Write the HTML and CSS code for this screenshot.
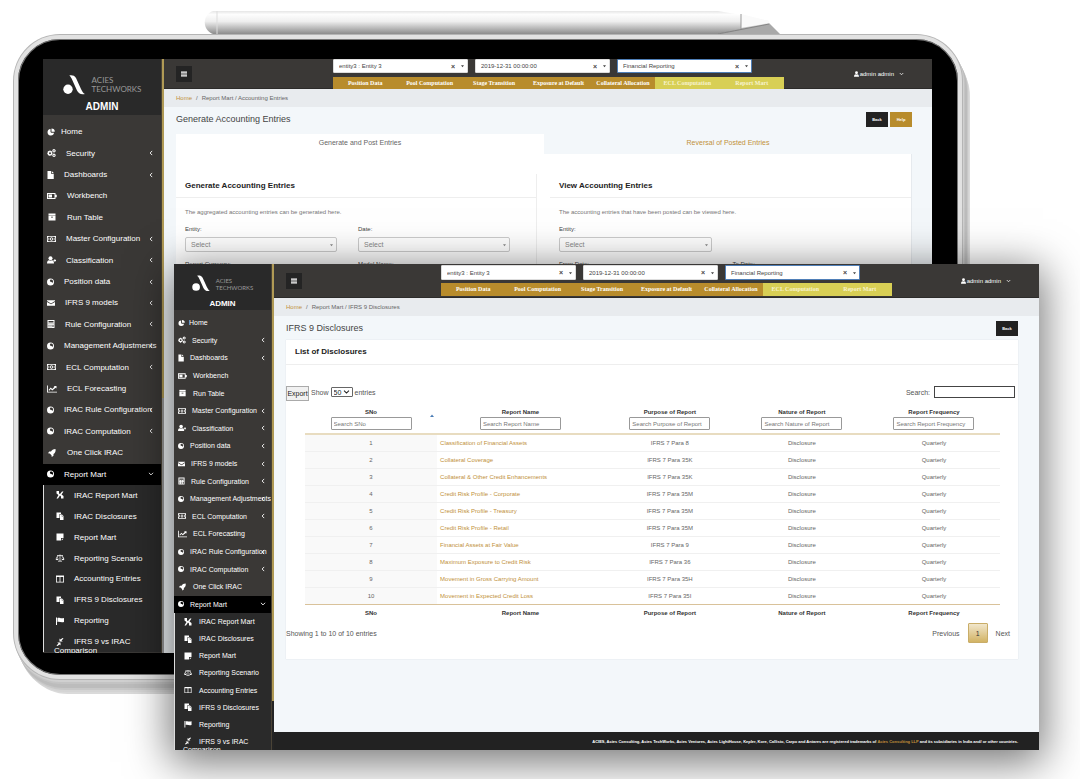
FILE: index.html
```html
<!DOCTYPE html>
<html lang="en">
<head>
<meta charset="utf-8">
<meta name="viewport" content="width=device-width, initial-scale=1">
<title>Acies TechWorks</title>
<link rel="stylesheet" href="styles.css">
</head>
<body>
<svg class="sprite" aria-hidden="true">
  <symbol id="pie" viewBox="0 0 16 16"><path d="M7 2a6.500 6.500 0 1 0 7 7.500H8.500L7 8z"/><path d="M9 1a6.500 6.500 0 0 1 6.500 6.500H9z"/></symbol>
  <symbol id="cogs" viewBox="0 0 18 16"><path fill-rule="evenodd" d="M5 3h2l.4 1.500 1.600-.6 1.300 1.500-.9 1.300 1.600.8v2l-1.600.5.7 1.500L8.700 13 7.300 12.200 6.800 14h-2l-.5-1.800L2.700 13 1.300 11.500 2 10 .5 9.500v-2L2 7l-.7-1.500L2.700 4l1.600.6zM6 6.500a2 2 0 1 0 0 4 2 2 0 0 0 0-4z"/><path fill-rule="evenodd" d="M14 0l2 1 1.500 2L16.500 6 14 7 11.500 6l-1-2.500L11.500 1zM14 2.300a1.300 1.300 0 1 0 0 2.600 1.300 1.300 0 0 0 0-2.600zM14 9l2 1 1.500 2-1 3L14 16l-2.500-1-1-2.500 1-2.500zM14 11.300a1.300 1.300 0 1 0 0 2.600 1.300 1.300 0 0 0 0-2.600z"/></symbol>
  <symbol id="file" viewBox="0 0 14 16"><path d="M1 0h7v5.500h5.500V16H1z"/><path d="M9.500 0l4 4.200h-4z"/></symbol>
  <symbol id="battery" viewBox="0 0 20 14"><path fill-rule="evenodd" d="M0 1h17v3.500h2.500v5H17V13H0zM2 3v8h13V3z"/><path d="M3 4h7v6H3z"/></symbol>
  <symbol id="archive" viewBox="0 0 20 16"><path d="M3 1h14v4H3z"/><path fill-rule="evenodd" d="M3 5.500h14V15H3zM8 7.500V9h4V7.500z"/></symbol>
  <symbol id="money" viewBox="0 0 18 14"><path fill-rule="evenodd" d="M0 1h18v12H0zM3.500 2.500L1.500 4.500v5l2 2h11l2-2v-5l-2-2z"/><path fill-rule="evenodd" d="M9 3.500a3 3.500 0 1 1 0 7 3 3.500 0 0 1 0-7zM8.200 5v4h1.600V5zM3 5h1.500v4H3zM13.500 5H15v4h-1.500z"/></symbol>
  <symbol id="user" viewBox="0 0 18 16"><circle cx="7" cy="4.500" r="4"/><path d="M0 15c0-5 2-6.500 4-6.500 2 1.200 4 1.200 6 0 2 0 4 1.500 4 6.500z"/><path d="M13 8h2V6h1.500v2h2v1.800h-2v2H15v-2h-2z"/></symbol>
  <symbol id="globe" viewBox="0 0 16 16"><path fill-rule="evenodd" d="M8 0a8 8 0 1 1 0 16A8 8 0 0 1 8 0zM8 2.500l-1.500 2 1 3 3 .5 1.500 2 2-2.500-1-3.500-2.500-2z"/></symbol>
  <symbol id="mail" viewBox="0 0 18 16"><path d="M0 2h18v1.500L9 9 0 3.500z"/><path d="M0 5.500L9 11l9-5.500V14H0z"/></symbol>
  <symbol id="calc" viewBox="0 0 16 16"><path fill-rule="evenodd" d="M1 0h14v16H1zM3 2v3h10V2zM3 7v1.500h2V7zM7 7v1.500h2V7zM11 7v1.500h2V7zM3 10v1.500h2V10zM7 10v1.500h2V10zM11 10v4h2v-4zM3 13v1.500h2V13zM7 13v1.500h2V13z"/></symbol>
  <symbol id="chart" viewBox="0 0 20 16"><path d="M0 1h1.800v12.500H20V15H0z"/><path d="M3 10l4.500-5 3 3L15 3.500l-1.500-1.500H19v5l-1.700-1.500L10.500 11l-3-3L4.500 11.500z"/></symbol>
  <symbol id="rocket" viewBox="0 0 20 16"><path d="M17 0c-5 0-7 2-9 5H4.500L2 8.500l3.500.5 3.500 3.500.5 3.500 3.500-2.500V10c3-2 5-5 4-10z"/></symbol>
  <symbol id="percent" viewBox="0 0 16 16"><path d="M1 0h5v5l2 1 4-5h3l-4 6 4 3v5h-5v-4L8 9l-4 6H1l4-7-4-3z"/></symbol>
  <symbol id="paste" viewBox="0 0 16 16"><path d="M1 1h9v3H7v8H1z"/><path fill-rule="evenodd" d="M8 5h4l3 3v8H8zM11.500 6.500v2.500h2.500z"/></symbol>
  <symbol id="note" viewBox="0 0 16 16"><path d="M1 1h14v9h-5v5H1z"/><path d="M11.500 11.500H15L11.500 15z"/></symbol>
  <symbol id="scale" viewBox="0 0 18 16"><path d="M8.300 1h1.400v1.500H15V4h-.5l3.200 6c0 3-5.500 3-5.500 0l2.300-5-4.800-1v9.500H13V15H5v-1.500h3.300V4L3.500 5 6 10c0 3-5.700 3-5.700 0l3-6H3V2.500h5.300zM3.200 6.500L1.700 9.800h3zM14.200 6.500l-1.300 3.300h2.900z"/></symbol>
  <symbol id="columns" viewBox="0 0 18 16"><path fill-rule="evenodd" d="M1 1h16v14H1zM2.600 4v9.400h5.600V4zM9.800 4v9.400h5.600V4z"/></symbol>
  <symbol id="flag" viewBox="0 0 18 16"><path d="M1 1h2v15H1zM4 2c4-1.500 6 2 13 0v8c-6 2-9-1.500-13 0z"/></symbol>
  <symbol id="compress" viewBox="0 0 18 16"><path d="M2 15l4-4-2.500-2H10v6l-2-2L4 16zM16 1l-4 4 2.500 2H8V1l2 2L14 0z"/></symbol>
  <symbol id="left" viewBox="0 0 8 10"><path d="M6 1.500L2.500 5 6 8.500" fill="none" stroke="currentColor" stroke-width="1.500"/></symbol>
  <symbol id="down" viewBox="0 0 10 8"><path d="M1.500 2L5 5.500 8.500 2" fill="none" stroke="currentColor" stroke-width="1.500"/></symbol>
  <symbol id="caret" viewBox="0 0 8 8"><path d="M0 2h8L4 7z"/></symbol>
  <symbol id="up" viewBox="0 0 8 8"><path d="M0 6h8L4 1z"/></symbol>
  <symbol id="person" viewBox="0 0 14 16"><circle cx="7" cy="4.500" r="4"/><path d="M0 16c0-5 2-7.500 4-7.500 2 1.200 4 1.200 6 0 2 0 4 2.500 4 7.500z"/></symbol>
  <symbol id="bars" viewBox="0 0 10 10"><path d="M0 1h10v2H0zM0 4h10v2H0zM0 7h10v2H0z"/></symbol>
  <symbol id="logo" viewBox="2 3 22 20"><circle cx="7" cy="17.300" r="4.700"/><path d="M8.300 3.500C11 3 13.500 3.500 15 6l5 11c1.500 3 2.500 4.500 4 5-4 1-6.500-.5-8-3.500l-4.500-10C10.500 6 9.500 4.500 8.300 3.500z"/></symbol>
</svg>

<main class="stage">
  <svg class="stylus" viewBox="0 0 580 26" aria-hidden="true">
    <defs><linearGradient id="barrel" x1="0" y1="0" x2="0" y2="1"><stop offset="0" stop-color="#e6e6e6"/><stop offset=".15" stop-color="#fdfdfd"/><stop offset=".45" stop-color="#efefef"/><stop offset="1" stop-color="#8c8c8c"/></linearGradient></defs>
    <path d="M515 24L566 13L578 25H515z" fill="#a9a9a9"/>
    <path d="M10 1H515L538 5L566 11V14L515 24H10C-1 20-1 5 10 1z" fill="url(#barrel)"/>
    <path d="M538 4l28 7v2l-28 5z" fill="#fafafa"/>
    <path d="M14 1v23" stroke="#ddd"/><path d="M538 4v15" stroke="#999"/><path d="M515 24l51-10" stroke="#777" stroke-width=".8"/>
  </svg>

  <section class="tablet" aria-label="Accounting entries">
    <div class="app app-back">
      <aside class="sidebar">
        <div class="brand"><div class="brand-row"><svg class="logo"><use href="#logo"/></svg><span>ACIES<br>TECHWORKS</span></div><strong>ADMIN</strong></div>
        <ul class="menu">
          <li><a class="home" href="#"><svg class="w1"><use href="#pie"/></svg>Home</a></li>
          <li><a href="#"><svg class="w2"><use href="#cogs"/></svg>Security<svg class="chev"><use href="#left"/></svg></a></li>
          <li><a href="#"><svg><use href="#file"/></svg>Dashboards<svg class="chev"><use href="#left"/></svg></a></li>
          <li><a href="#"><svg class="w3"><use href="#battery"/></svg>Workbench</a></li>
          <li><a href="#"><svg class="w3"><use href="#archive"/></svg>Run Table</a></li>
          <li><a href="#"><svg class="w2"><use href="#money"/></svg>Master Configuration<svg class="chev"><use href="#left"/></svg></a></li>
          <li><a href="#"><svg class="w2"><use href="#user"/></svg>Classification<svg class="chev"><use href="#left"/></svg></a></li>
          <li><a href="#"><svg><use href="#globe"/></svg>Position data<svg class="chev"><use href="#left"/></svg></a></li>
          <li><a href="#"><svg class="w1"><use href="#mail"/></svg>IFRS 9 models<svg class="chev"><use href="#left"/></svg></a></li>
          <li><a href="#"><svg class="w1"><use href="#calc"/></svg>Rule Configuration<svg class="chev"><use href="#left"/></svg></a></li>
          <li><a href="#"><svg><use href="#globe"/></svg>Management Adjustments<svg class="chev"><use href="#left"/></svg></a></li>
          <li><a href="#"><svg class="w2"><use href="#money"/></svg>ECL Computation<svg class="chev"><use href="#left"/></svg></a></li>
          <li><a href="#"><svg class="w3"><use href="#chart"/></svg>ECL Forecasting</a></li>
          <li><a href="#"><svg><use href="#globe"/></svg>IRAC Rule Configuration<svg class="chev"><use href="#left"/></svg></a></li>
          <li><a href="#"><svg><use href="#globe"/></svg>IRAC Computation<svg class="chev"><use href="#left"/></svg></a></li>
          <li><a href="#"><svg class="w3"><use href="#rocket"/></svg>One Click IRAC</a></li>
          <li class="open"><a href="#"><svg><use href="#globe"/></svg>Report Mart<svg class="chev"><use href="#down"/></svg></a></li>
        </ul>
        <ul class="submenu">
          <li><a href="#"><svg><use href="#percent"/></svg>IRAC Report Mart</a></li>
          <li><a href="#"><svg><use href="#paste"/></svg>IRAC Disclosures</a></li>
          <li><a href="#"><svg><use href="#note"/></svg>Report Mart</a></li>
          <li><a href="#"><svg><use href="#scale"/></svg>Reporting Scenario</a></li>
          <li><a href="#"><svg><use href="#columns"/></svg>Accounting Entries</a></li>
          <li><a href="#"><svg><use href="#paste"/></svg>IFRS 9 Disclosures</a></li>
          <li><a href="#"><svg><use href="#flag"/></svg>Reporting</a></li>
          <li><a class="two-line" href="#"><svg><use href="#compress"/></svg><span>IFRS 9 vs IRAC</span><span class="second">Comparison</span></a></li>
        </ul>
      </aside>
      <div class="rail"></div>
      <div class="main">
        <header class="topbar">
          <button class="burger" aria-label="Menu"><svg><use href="#bars"/></svg></button>
          <div class="switcher">
            <div class="combos">
              <div class="combo"><select aria-label="Entity"><option>entity3 : Entity 3</option></select><button aria-label="Clear entity">×</button><svg><use href="#caret"/></svg></div>
              <div class="combo"><select aria-label="Date"><option>2019-12-31 00:00:00</option></select><button aria-label="Clear date">×</button><svg><use href="#caret"/></svg></div>
              <div class="combo focus"><select aria-label="Purpose"><option>Financial Reporting</option></select><button aria-label="Clear purpose">×</button><svg><use href="#caret"/></svg></div>
            </div>
            <nav class="steps"><a href="#">Position Data</a><a href="#">Pool Computation</a><a href="#">Stage Transition</a><a href="#">Exposure at Default</a><a href="#">Collateral Allocation</a><a class="lit" href="#">ECL Computation</a><a class="lit" href="#">Report Mart</a></nav>
          </div>
          <button class="account"><svg><use href="#person"/></svg>admin admin<svg class="arrow"><use href="#down"/></svg></button>
        </header>
        <nav class="crumbs"><a href="#">Home</a><span>/</span><span>Report Mart / Accounting Entries</span></nav>
        <div class="heading"><h1>Generate Accounting Entries</h1><div class="actions"><button class="btn">Back</button><button class="btn gold">Help</button></div></div>
        <div class="tabs"><a class="current" href="#">Generate and Post Entries</a><a href="#">Reversal of Posted Entries</a></div>
        <div class="panel">
          <section class="pane">
            <h2>Generate Accounting Entries</h2>
            <div class="form"><p>The aggregated accounting entries can be generated here.</p>
              <label>Entity:<span class="pick"><select><option>Select</option></select><svg><use href="#caret"/></svg></span></label>
              <label>Date:<span class="pick"><select><option>Select</option></select><svg><use href="#caret"/></svg></span></label>
              <label>Report Currency:<span class="pick"><select><option>Select</option></select><svg><use href="#caret"/></svg></span></label>
              <label>Model Name:<span class="pick"><select><option>Select</option></select><svg><use href="#caret"/></svg></span></label>
            </div>
          </section>
          <section class="pane">
            <h2>View Accounting Entries</h2>
            <div class="form"><p>The accounting entries that have been posted can be viewed here.</p>
              <label class="solo">Entity:<span class="pick"><select><option>Select</option></select><svg><use href="#caret"/></svg></span></label>
              <label>From Date:<span class="pick"><select><option>Select</option></select><svg><use href="#caret"/></svg></span></label>
              <label>To Date:<span class="pick"><select><option>Select</option></select><svg><use href="#caret"/></svg></span></label>
            </div>
          </section>
        </div>
      </div>
    </div>
  </section>

  <section class="window" aria-label="Disclosures">
    <div class="app app-front">
      <aside class="sidebar">
        <div class="brand"><div class="brand-row"><svg class="logo"><use href="#logo"/></svg><span>ACIES<br>TECHWORKS</span></div><strong>ADMIN</strong></div>
        <ul class="menu">
          <li><a class="home" href="#"><svg class="w1"><use href="#pie"/></svg>Home</a></li>
          <li><a href="#"><svg class="w2"><use href="#cogs"/></svg>Security<svg class="chev"><use href="#left"/></svg></a></li>
          <li><a href="#"><svg><use href="#file"/></svg>Dashboards<svg class="chev"><use href="#left"/></svg></a></li>
          <li><a href="#"><svg class="w3"><use href="#battery"/></svg>Workbench</a></li>
          <li><a href="#"><svg class="w3"><use href="#archive"/></svg>Run Table</a></li>
          <li><a href="#"><svg class="w2"><use href="#money"/></svg>Master Configuration<svg class="chev"><use href="#left"/></svg></a></li>
          <li><a href="#"><svg class="w2"><use href="#user"/></svg>Classification<svg class="chev"><use href="#left"/></svg></a></li>
          <li><a href="#"><svg><use href="#globe"/></svg>Position data<svg class="chev"><use href="#left"/></svg></a></li>
          <li><a href="#"><svg class="w1"><use href="#mail"/></svg>IFRS 9 models<svg class="chev"><use href="#left"/></svg></a></li>
          <li><a href="#"><svg class="w1"><use href="#calc"/></svg>Rule Configuration<svg class="chev"><use href="#left"/></svg></a></li>
          <li><a href="#"><svg><use href="#globe"/></svg>Management Adjustments<svg class="chev"><use href="#left"/></svg></a></li>
          <li><a href="#"><svg class="w2"><use href="#money"/></svg>ECL Computation<svg class="chev"><use href="#left"/></svg></a></li>
          <li><a href="#"><svg class="w3"><use href="#chart"/></svg>ECL Forecasting</a></li>
          <li><a href="#"><svg><use href="#globe"/></svg>IRAC Rule Configuration<svg class="chev"><use href="#left"/></svg></a></li>
          <li><a href="#"><svg><use href="#globe"/></svg>IRAC Computation<svg class="chev"><use href="#left"/></svg></a></li>
          <li><a href="#"><svg class="w3"><use href="#rocket"/></svg>One Click IRAC</a></li>
          <li class="open"><a href="#"><svg><use href="#globe"/></svg>Report Mart<svg class="chev"><use href="#down"/></svg></a></li>
        </ul>
        <ul class="submenu">
          <li><a href="#"><svg><use href="#percent"/></svg>IRAC Report Mart</a></li>
          <li><a href="#"><svg><use href="#paste"/></svg>IRAC Disclosures</a></li>
          <li><a href="#"><svg><use href="#note"/></svg>Report Mart</a></li>
          <li><a href="#"><svg><use href="#scale"/></svg>Reporting Scenario</a></li>
          <li><a href="#"><svg><use href="#columns"/></svg>Accounting Entries</a></li>
          <li><a href="#"><svg><use href="#paste"/></svg>IFRS 9 Disclosures</a></li>
          <li><a href="#"><svg><use href="#flag"/></svg>Reporting</a></li>
          <li><a class="two-line" href="#"><svg><use href="#compress"/></svg><span>IFRS 9 vs IRAC</span><span class="second">Comparison</span></a></li>
        </ul>
      </aside>
      <div class="rail"></div>
      <div class="main">
        <header class="topbar">
          <button class="burger" aria-label="Menu"><svg><use href="#bars"/></svg></button>
          <div class="switcher">
            <div class="combos">
              <div class="combo"><select aria-label="Entity"><option>entity3 : Entity 3</option></select><button aria-label="Clear entity">×</button><svg><use href="#caret"/></svg></div>
              <div class="combo"><select aria-label="Date"><option>2019-12-31 00:00:00</option></select><button aria-label="Clear date">×</button><svg><use href="#caret"/></svg></div>
              <div class="combo focus"><select aria-label="Purpose"><option>Financial Reporting</option></select><button aria-label="Clear purpose">×</button><svg><use href="#caret"/></svg></div>
            </div>
            <nav class="steps"><a href="#">Position Data</a><a href="#">Pool Computation</a><a href="#">Stage Transition</a><a href="#">Exposure at Default</a><a href="#">Collateral Allocation</a><a class="lit" href="#">ECL Computation</a><a class="lit" href="#">Report Mart</a></nav>
          </div>
          <button class="account"><svg><use href="#person"/></svg>admin admin<svg class="arrow"><use href="#down"/></svg></button>
        </header>
        <nav class="crumbs"><a href="#">Home</a><span>/</span><span>Report Mart / IFRS 9 Disclosures</span></nav>
        <div class="heading"><h1>IFRS 9 Disclosures</h1><div class="actions"><button class="btn">Back</button></div></div>
        <section class="card">
          <h2>List of Disclosures</h2>
          <div class="tools">
            <button class="export">Export</button>
            <label class="length">Show <span class="mini"><select><option>50</option></select><svg><use href="#down"/></svg></span> entries</label>
            <label class="find">Search: <input type="search"></label>
          </div>
          <table>
            <colgroup><col class="c-no"><col class="c-name"><col class="c-mid"><col class="c-mid"><col class="c-mid"></colgroup>
            <thead><tr>
              <th>SNo<svg class="sort"><use href="#up"/></svg><input aria-label="Search SNo" placeholder="Search SNo"></th>
              <th>Report Name<input aria-label="Search Report Name" placeholder="Search Report Name"></th>
              <th>Purpose of Report<input aria-label="Search Purpose of Report" placeholder="Search Purpose of Report"></th>
              <th>Nature of Report<input aria-label="Search Nature of Report" placeholder="Search Nature of Report"></th>
              <th>Report Frequency<input aria-label="Search Report Frequency" placeholder="Search Report Frequency"></th>
            </tr></thead>
            <tbody>
              <tr><td>1</td><td><a href="#">Classification of Financial Assets</a></td><td>IFRS 7 Para 8</td><td>Disclosure</td><td>Quarterly</td></tr>
              <tr><td>2</td><td><a href="#">Collateral Coverage</a></td><td>IFRS 7 Para 35K</td><td>Disclosure</td><td>Quarterly</td></tr>
              <tr><td>3</td><td><a href="#">Collateral &amp; Other Credit Enhancements</a></td><td>IFRS 7 Para 35K</td><td>Disclosure</td><td>Quarterly</td></tr>
              <tr><td>4</td><td><a href="#">Credit Risk Profile - Corporate</a></td><td>IFRS 7 Para 35M</td><td>Disclosure</td><td>Quarterly</td></tr>
              <tr><td>5</td><td><a href="#">Credit Risk Profile - Treasury</a></td><td>IFRS 7 Para 35M</td><td>Disclosure</td><td>Quarterly</td></tr>
              <tr><td>6</td><td><a href="#">Credit Risk Profile - Retail</a></td><td>IFRS 7 Para 35M</td><td>Disclosure</td><td>Quarterly</td></tr>
              <tr><td>7</td><td><a href="#">Financial Assets at Fair Value</a></td><td>IFRS 7 Para 9</td><td>Disclosure</td><td>Quarterly</td></tr>
              <tr><td>8</td><td><a href="#">Maximum Exposure to Credit Risk</a></td><td>IFRS 7 Para 36</td><td>Disclosure</td><td>Quarterly</td></tr>
              <tr><td>9</td><td><a href="#">Movement in Gross Carrying Amount</a></td><td>IFRS 7 Para 35H</td><td>Disclosure</td><td>Quarterly</td></tr>
              <tr><td>10</td><td><a href="#">Movement in Expected Credit Loss</a></td><td>IFRS 7 Para 35I</td><td>Disclosure</td><td>Quarterly</td></tr>
            </tbody>
            <tfoot><tr><th>SNo</th><th>Report Name</th><th>Purpose of Report</th><th>Nature of Report</th><th>Report Frequency</th></tr></tfoot>
          </table>
          <div class="pager"><span>Showing 1 to 10 of 10 entries</span><button>Previous</button><button class="page">1</button><button>Next</button></div>
        </section>
        <footer class="legal"><p>ACIES, Acies Consulting, Acies TechWorks, Acies Ventures, Acies LightHouse, Kepler, Kore, Callisto, Carpo and Antares are registered trademarks of <a href="#">Acies Consulting LLP</a> and its subsidiaries in India and/ or other countries.</p></footer>
      </div>
    </div>
  </section>
</main>
</body>
</html>
```
FILE: styles.css
```css
* { box-sizing: border-box; }
body { margin: 0; background: #fff; font-family: "Liberation Sans", Arial, sans-serif; font-size: 7px; color: #555; }
h1, h2, p, ul { margin: 0; padding: 0; }
ul { list-style: none; }
a { color: #c1913a; text-decoration: none; }
button, select, input { font: inherit; color: inherit; margin: 0; padding: 0; border: 0; background: none; border-radius: 0; }
select { appearance: none; }
svg { fill: currentColor; flex: none; }
.sprite { position: absolute; width: 0; height: 0; }

/* Overlapping devices on a free canvas */
.stage { position: relative; min-height: 100vh; overflow: hidden; }
.stylus { position: absolute; left: 203px; top: 10px; width: 580px; height: 26px; }
.tablet {
  position: absolute; inset: 35px 118px 100px 14px;
  padding: 20px 26px 22px 25px;
  border: 4px solid #e2e2e2; border-radius: 46px; background: #000;
  box-shadow: inset 0 0 0 1px #777, 0 0 0 1px #b5b5b5,
    1px 2px 0 1px #d0d0d0, 2px 4px 0 1px #c4c4c4, 3px 6px 0 1px #bcbcbc, 4px 8px 0 1px #bcbcbc,
    5px 10px 0 1px #c8c8c8, 6px 12px 0 1px #d4d4d4, 8px 15px 0 0 #dadada;
}
.window { position: absolute; inset: 264px 41px 29px 174px; box-shadow: 0 8px 40px 4px rgba(0, 0, 0, .55); }

.app { display: grid; height: 100%; overflow: hidden; background: #f3f7fa; }
.app-back {
  grid-template-columns: 118px 3px minmax(0, 1fr);
  --icon: 7px; --icon-gap: 10px; --home-gap: 6px; --side-text: 8px;
  --menu: 364px; --submenu: 167px; --sub-left: 11px; --sub-gap: 9px; --sub-icon: 10px; --edge: 4px;
  --brand: 56px; --after-brand: 6px; --gold-end: 57%; --rail-rest: #999;
  --bar: 30px; --bar-gap: 4px; --combo: 14px; --switch-gap: 141px; --right: 20px; --account: 28px;
}
.app-front {
  grid-template-columns: 97px 3px minmax(0, 1fr);
  --icon: 6px; --icon-gap: 6px; --home-gap: 4px; --side-text: 7px;
  --menu: 299px; --submenu: 137px; --sub-left: 9px; --sub-gap: 7px; --sub-icon: 8px; --edge: 4px;
  --brand: 46px; --after-brand: 4px; --gold-end: 90%; --rail-rest: #242424;
  --bar: 34px; --bar-gap: 3px; --combo: 15px; --switch-gap: 139px; --right: 21px; --account: 28px;
}

/* Sidebar */
.sidebar { height: 100%; min-height: 0; overflow: hidden; background: #3a3836; color: #fff; font-size: var(--side-text); }
.brand { height: var(--brand); margin-bottom: var(--after-brand); background: #292929; display: flex; flex-direction: column; align-items: center; justify-content: flex-end; }
.brand-row { display: flex; align-items: center; color: #999; font-family: Lato, sans-serif; font-size: 8px; line-height: 9px; gap: 7px; }
.logo { width: 22px; height: 20px; color: #fff; }
.brand strong { font-size: 10px; line-height: 16px; }
.app-back .brand-row { margin-bottom: 4px; }
.app-front .brand-row { font-size: 6px; line-height: 7px; gap: 6px; }
.app-front .logo { width: 18px; height: 17px; }
.app-front .brand strong { font-size: 8px; line-height: 13px; margin-top: 5px; }
.menu { display: flex; flex-direction: column; height: var(--menu); }
.menu li, .submenu li { flex: 1; min-height: 0; display: flex; }
.sidebar a { position: relative; flex: 1; display: flex; align-items: center; gap: var(--icon-gap); padding-left: var(--edge); color: #fff; white-space: nowrap; }
.sidebar a.home { gap: var(--home-gap); }
.sidebar a svg { width: var(--icon); height: 8px; }
.sidebar a .w1 { width: calc(var(--icon) + 1px); }
.sidebar a .w2 { width: calc(var(--icon) + 2px); }
.sidebar a .w3 { width: calc(var(--icon) + 3px); }
.sidebar a .chev { position: absolute; right: 7px; width: 6px; height: 6px; }
.app-front .sidebar a .chev { right: 5px; }
.menu .open { background: #000; }
.submenu { display: flex; flex-direction: column; height: var(--submenu); background: #2a2a2a; border-left: 1px solid #ddd; }
.submenu a { padding-left: var(--sub-left); gap: var(--sub-gap); }
.sidebar .submenu svg { width: var(--sub-icon); height: 8px; }
.sidebar .two-line { flex-wrap: wrap; row-gap: 1px; align-content: center; height: calc(100% + 9px); }
.two-line .second { flex-basis: 100%; line-height: 8px; margin-left: -1px; }
.rail { border-left: 1px solid #4a4336; background: linear-gradient(#b09a55 var(--gold-end), var(--rail-rest) var(--gold-end)); }

/* Top bar */
.main { display: flex; flex-direction: column; min-width: 0; min-height: 0; }
.topbar { height: var(--bar); flex: none; display: flex; align-items: center; padding: 0 var(--account) 0 12px; background: #3a3836; border-bottom: 1px solid #2c2b2a; color: #fff; }
.burger { width: 16px; height: 16px; background: #242424; display: grid; place-items: center; }
.burger svg { width: 6px; height: 6px; }
.switcher { flex: 0 1 451px; margin-left: var(--switch-gap); align-self: flex-start; display: flex; flex-direction: column; gap: var(--bar-gap); }
.app-front .switcher { padding-top: 1px; }
.combos { display: grid; grid-template-columns: repeat(3, 135px); gap: 7px; }
.combo { display: flex; align-items: center; height: var(--combo); padding: 0 3px 0 5px; background: #fff; color: #444; border: 1px solid #ddd; border-radius: 1px; font-size: 6px; }
.combo.focus { border-color: #4f7fb8; }
.combo select { flex: 1; min-width: 0; }
.combo button { font-size: 7px; font-weight: bold; margin-right: 6px; }
.combo svg { width: 3px; height: 4px; }
.steps { display: grid; grid-template-columns: repeat(7, 1fr); height: 13px; background: #b88c2c; }
.steps a { color: #fff; font: bold 6px/13px "Liberation Serif", serif; text-align: center; white-space: nowrap; }
.steps .lit { background: #d8cf55; color: #f7f3cf; }
.account { display: flex; align-items: center; gap: 1px; margin-left: auto; font-size: 6px; }
.account svg { width: 5px; height: 6px; }
.account .arrow { margin-left: 4px; }

/* Page body */
.crumbs { display: flex; align-items: center; gap: 4px; height: 18px; flex: none; padding: 0 12px; background: #e8ebee; font-size: 6px; color: #666; }
.heading { display: flex; justify-content: space-between; align-items: center; height: 24px; flex: none; padding: 0 var(--right) 0 12px; }
h1 { font-size: 9px; font-weight: normal; color: #444; }
.actions { display: flex; gap: 2px; }
.btn { width: 22px; height: 15px; background: #222; color: #fff; font-size: 4px; font-weight: bold; text-align: center; }
.btn.gold { background: #b88c2c; }
h2 { font-size: 8px; line-height: 23px; color: #222; padding-left: 9px; border-bottom: 1px solid #eee; }
.tabs { display: grid; grid-template-columns: 1fr 1fr; height: 20px; flex: none; margin: 3px var(--right) 0 12px; text-align: center; line-height: 18px; }
.tabs .current { background: #fff; color: #666; }
.panel { display: grid; grid-template-columns: 1fr 1fr; column-gap: 13px; flex: 1; margin: 0 var(--right) 0 12px; padding-top: 20px; background: #fff; border-right: 1px solid #e6eaee; }
.pane:first-child { border-right: 1px solid #eee; }
.form { display: grid; grid-template-columns: 1fr 1fr; gap: 8px 21px; padding: 9px 26px 0 9px; font-size: 6px; }
.form p { grid-column: 1 / -1; color: #777; line-height: 10px; }
.form label { display: flex; flex-direction: column; gap: 4px; line-height: 8px; color: #444; }
.form .solo { grid-column: 1 / -1; width: calc(50% - 10px); }
.pick { display: flex; align-items: center; height: 15px; padding: 0 3px 0 5px; border: 1px solid #ccc; border-radius: 2px; color: #888; font-size: 7px; }
.pick select { flex: 1; }
.pick svg { width: 3px; height: 4px; }

/* Disclosure list */
.card { flex: none; margin: 0 var(--right) 0 12px; padding-bottom: 16px; background: #fff; box-shadow: 0 0 1px #cdd5dc; }
.card h2 { line-height: 24px; }
.tools { display: flex; align-items: flex-start; gap: 2px; padding: 21px 3px 0 0; height: 41px; }
.export { width: 23px; height: 15px; border: 1px solid #aaa; background: #f1f1f1; color: #222; white-space: nowrap; }
.length { display: flex; align-items: center; gap: 2px; height: 12px; }
.mini { display: flex; align-items: center; width: 22px; height: 10px; padding: 0 2px; border: 1px solid #666; border-radius: 1px; color: #222; }
.mini select { flex: 1; min-width: 0; }
.mini svg { width: 7px; height: 6px; }
.find { margin-left: auto; display: flex; align-items: center; gap: 4px; }
.find input { width: 81px; height: 12px; border: 1px solid #444; }
table { width: calc(100% - 37px); margin-left: 19px; border-collapse: collapse; table-layout: fixed; text-align: center; font-size: 6px; color: #666; }
.c-no { width: 19%; }
.c-name { width: 24%; }
.c-mid { width: 19%; }
th { position: relative; color: #333; padding: 0; line-height: 9px; }
thead th { height: 28px; vertical-align: top; padding-top: 2px; border-bottom: 2px solid #e8dcc0; }
th input { display: block; width: 81px; height: 13px; margin: 0 auto; padding: 0 2px; border: 1px solid #999; border-radius: 1px; font-size: 6px; font-weight: normal; }
::placeholder { color: #777; opacity: 1; }
.sort { position: absolute; right: 3px; top: 8px; width: 4px; height: 4px; color: #4a7cb5; }
td { height: 17px; padding: 0; border-bottom: 1px solid #f0f0f0; }
td:first-child { background: #f9f9f9; }
td:nth-child(2) { text-align: left; padding-left: 3px; }
tbody tr:last-child td { border-bottom: 1px solid #d9c29a; }
tfoot th { height: 19px; }
.pager { display: flex; align-items: center; gap: 8px; padding-right: 8px; height: 20px; }
.pager span { margin-right: auto; }
.pager .page { width: 20px; height: 20px; border: 1px solid #c9ad68; border-radius: 1px; background: linear-gradient(#f1e6cb, #d2b364); color: #333; }
.legal { margin-top: auto; display: flex; align-items: center; justify-content: flex-end; height: 18px; padding-right: 21px; background: #222; color: #fff; font-size: 4px; font-weight: bold; white-space: nowrap; }
```
